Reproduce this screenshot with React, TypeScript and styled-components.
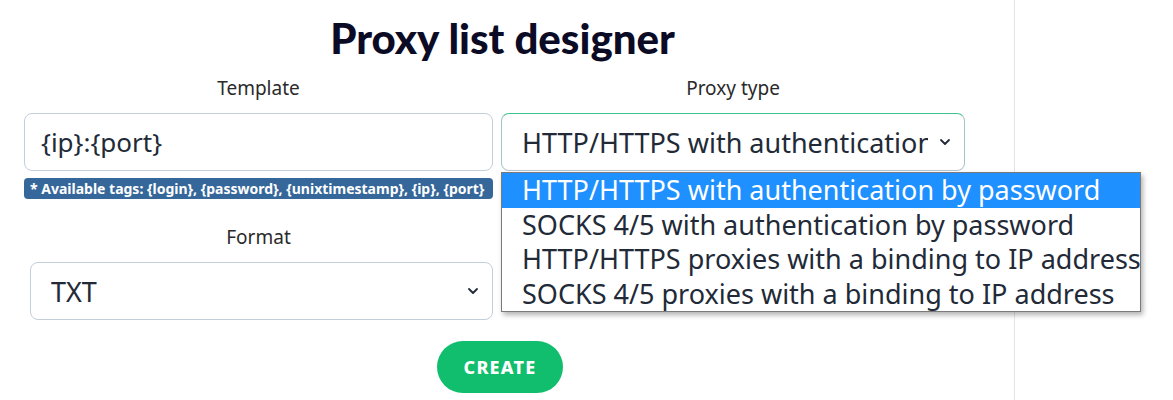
import React, { useState } from "react";
import styled, { createGlobalStyle } from "styled-components";

const GlobalStyle = createGlobalStyle`
  html, body {
    margin: 0;
    padding: 0;
    background: #fff;
  }
  body {
    font-family: "Noto Sans", "Open Sans", sans-serif;
    color: #222a38;
  }
`;

const Page = styled.div`
  display: flex;
  height: 400px;
`;

const Main = styled.main`
  width: 1015px;
  box-sizing: border-box;
  border-right: 1px solid #e4e4e4;
  padding: 12px 0 0 24px;
`;

const Title = styled.h1`
  margin: 0;
  width: 957px;
  text-align: center;
  font-family: Lato, "Noto Sans", sans-serif;
  font-weight: 900;
  font-size: 42px;
  line-height: 52px;
  color: #0b0b26;
`;

const Grid = styled.div`
  display: grid;
  grid-template-columns: 469px 464px;
  column-gap: 8px;
  align-items: start;
`;

const Field = styled.div`
  display: flex;
  flex-direction: column;
`;

const Label = styled.label<{ gap?: number }>`
  display: block;
  text-align: center;
  font-size: 19px;
  line-height: 24px;
  color: #2a2a2a;
  margin-top: ${(p) => p.gap ?? 0}px;
  margin-bottom: 13px;
`;

const Control = styled.div`
  position: relative;
`;

const TextInput = styled.input`
  box-sizing: border-box;
  height: 58px;
  width: 100%;
  border: 1px solid #c3cedb;
  border-radius: 8px;
  padding: 0 16px;
  font-family: inherit;
  font-size: 26px;
  color: #222a38;
  outline: none;
`;

const SelectBox = styled.select<{ focused?: boolean; inset?: number }>`
  box-sizing: border-box;
  height: 58px;
  width: calc(100% - ${(p) => p.inset ?? 0}px);
  margin-left: ${(p) => p.inset ?? 0}px;
  display: block;
  appearance: none;
  -webkit-appearance: none;
  background: #fff
    url("data:image/svg+xml;utf8,<svg xmlns='http://www.w3.org/2000/svg' width='12' height='8' viewBox='0 0 12 8'><path d='M2 2l4 4 4-4' fill='none' stroke='%23222a38' stroke-width='1.8' stroke-linecap='round' stroke-linejoin='round'/></svg>")
    no-repeat right 13px center;
  border: 1px solid #c3cedb;
  border-color: ${(p) =>
    p.focused ? "#3fc48c #a6c4c6 #b3c3d2 #a6c4c6" : "#c3cedb"};
  border-radius: 8px;
  padding: 0 36px 0 20px;
  font-family: inherit;
  font-size: 27px;
  color: #222a38;
  outline: none;
`;

const Tags = styled.div`
  margin-top: 7px;
  height: 21px;
  box-sizing: border-box;
  border-radius: 4px;
  background: #35679a;
  color: #fff;
  font-size: 14px;
  font-weight: 700;
  line-height: 21px;
  padding: 0 6px;
  white-space: nowrap;
  overflow: hidden;
`;

const Dropdown = styled.ul`
  position: absolute;
  top: 59px;
  left: 0;
  width: 640px;
  margin: 0;
  padding: 0;
  list-style: none;
  box-sizing: border-box;
  background: #fff;
  border: 1px solid #7a7a7a;
  box-shadow: 2px 3px 5px rgba(0, 0, 0, 0.3);
  z-index: 10;
`;

const Option = styled.li<{ active?: boolean }>`
  height: 34.5px;
  line-height: 34px;
  padding-left: 20px;
  font-size: 27px;
  white-space: nowrap;
  color: ${(p) => (p.active ? "#fff" : "#222a38")};
  background: ${(p) => (p.active ? "#1e90ff" : "transparent")};
`;

const Actions = styled.div`
  width: 952px;
  display: flex;
  justify-content: center;
  margin-top: 21px;
`;

const CreateButton = styled.button`
  width: 126px;
  height: 52px;
  border: none;
  border-radius: 26px;
  background: #10be6d;
  color: #fff;
  font-family: inherit;
  font-weight: 800;
  font-size: 18px;
  letter-spacing: 1.2px;
  cursor: pointer;
`;

const proxyTypes = [
  "HTTP/HTTPS with authentication by password",
  "SOCKS 4/5 with authentication by password",
  "HTTP/HTTPS proxies with a binding to IP address",
  "SOCKS 4/5 proxies with a binding to IP address",
];

const App = () => {
  const [template, setTemplate] = useState("{ip}:{port}");
  const [proxyType, setProxyType] = useState(0);

  return (
    <>
      <GlobalStyle />
      <Page>
        <Main>
          <Title>Proxy list designer</Title>
          <Grid>
            <Field>
              <Label gap={12}>Template</Label>
              <TextInput
                value={template}
                onChange={(e) => setTemplate(e.target.value)}
              />
              <Tags>
                * Available tags: {"{login}"}, {"{password}"},{" "}
                {"{unixtimestamp}"}, {"{ip}"}, {"{port}"}
              </Tags>
            </Field>
            <Field>
              <Label gap={12}>Proxy type</Label>
              <Control>
                <SelectBox
                  focused
                  value={proxyType}
                  onChange={(e) => setProxyType(Number(e.target.value))}
                >
                  {proxyTypes.map((t, i) => (
                    <option key={t} value={i}>
                      {t}
                    </option>
                  ))}
                </SelectBox>
                <Dropdown>
                  {proxyTypes.map((t, i) => (
                    <Option
                      key={t}
                      active={i === proxyType}
                      onClick={() => setProxyType(i)}
                    >
                      {t}
                    </Option>
                  ))}
                </Dropdown>
              </Control>
            </Field>
            <Field>
              <Label gap={26}>Format</Label>
              <SelectBox inset={6} defaultValue="txt">
                <option value="txt">TXT</option>
                <option value="csv">CSV</option>
                <option value="json">JSON</option>
              </SelectBox>
            </Field>
          </Grid>
          <Actions>
            <CreateButton>CREATE</CreateButton>
          </Actions>
        </Main>
      </Page>
    </>
  );
};

export default App;
